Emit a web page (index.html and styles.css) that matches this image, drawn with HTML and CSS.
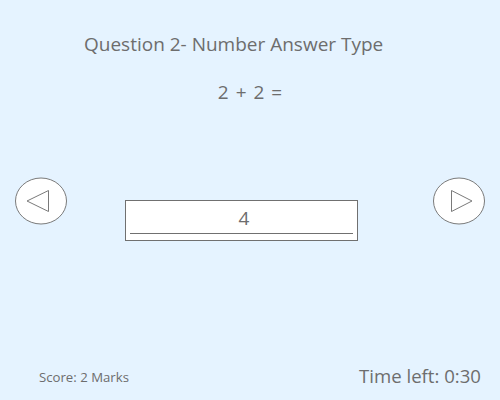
FILE: index.html
```html
<!DOCTYPE html>
<html>
<head>
<meta charset="utf-8">
<link rel="stylesheet" href="styles.css">
</head>
<body>
<div class="page">
  <h1 class="title">Question 2- Number Answer Type</h1>
  <div class="equation">2 + 2 =</div>
  <div class="middle">
    <button class="nav">
      <svg width="52" height="48" viewBox="0 0 52 48"><ellipse cx="26" cy="24" rx="25.5" ry="23" fill="#fff" stroke="#7a7a7a" stroke-width="1"/><polygon points="33.5,13.5 33.5,34.5 12,24" fill="none" stroke="#7a7a7a" stroke-width="1"/></svg>
    </button>
    <div class="answer">
      <div class="answer-value">4</div>
      <div class="answer-line"></div>
    </div>
    <button class="nav">
      <svg width="52" height="48" viewBox="0 0 52 48"><ellipse cx="26" cy="24" rx="25.5" ry="23" fill="#fff" stroke="#7a7a7a" stroke-width="1"/><polygon points="18.5,13.5 18.5,34.5 39,24" fill="none" stroke="#7a7a7a" stroke-width="1"/></svg>
    </button>
  </div>
  <div class="footer">
    <span class="score">Score: 2 Marks</span>
    <span class="time">Time left: 0:30</span>
  </div>
</div>
</body>
</html>
```
FILE: styles.css
```css
html, body {
  margin: 0;
  padding: 0;
}
body {
  background: #e5f3ff;
  font-family: "Open Sans", "Noto Sans", sans-serif;
  color: #6d6d6d;
}
.page {
  width: 500px;
  height: 400px;
  display: flex;
  flex-direction: column;
  box-sizing: border-box;
}
.title {
  margin: 31px 0 0 84px;
  font-size: 19px;
  font-weight: 400;
  line-height: 26px;
}
.equation {
  margin-top: 22px;
  text-align: center;
  font-size: 19px;
  line-height: 26px;
  word-spacing: 2px;
}
.middle {
  margin-top: 72px;
  display: flex;
  align-items: flex-start;
  padding: 0 0 0 15px;
}
.nav {
  padding: 0;
  margin: 0;
  border: none;
  background: none;
  width: 52px;
  height: 48px;
  display: block;
  flex: none;
}
.nav svg {
  display: block;
}
.answer {
  margin: 23px 75px 0 58px;
  width: 231px;
  height: 39px;
  background: #fff;
  border: 1px solid #707070;
  display: flex;
  flex-direction: column;
  align-items: center;
  flex: none;
}
.answer-value {
  font-size: 19px;
  line-height: 24px;
  margin-top: 5px;
  padding-left: 5px;
}
.answer-line {
  width: 223px;
  border-top: 1px solid #707070;
  margin-top: 3px;
}
.footer {
  margin-top: auto;
  display: flex;
  justify-content: space-between;
  align-items: flex-end;
  padding: 0 19px 12px 39px;
}
.score {
  font-size: 13.2px;
  line-height: 16px;
  padding-bottom: 3px;
}
.time {
  font-size: 18.6px;
  line-height: 24px;
}
```
